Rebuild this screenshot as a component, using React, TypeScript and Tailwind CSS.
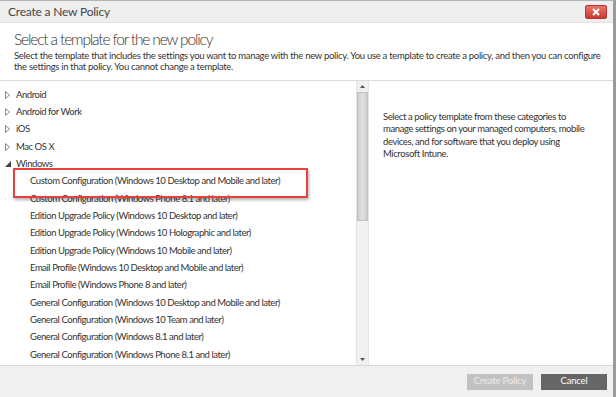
import React from "react";

const items: { label: string; level: number; icon?: "closed" | "open" }[] = [
  { label: "Android", level: 0, icon: "closed" },
  { label: "Android for Work", level: 0, icon: "closed" },
  { label: "iOS", level: 0, icon: "closed" },
  { label: "Mac OS X", level: 0, icon: "closed" },
  { label: "Windows", level: 0, icon: "open" },
  { label: "Custom Configuration (Windows 10 Desktop and Mobile and later)", level: 1 },
  { label: "Custom Configuration (Windows Phone 8.1 and later)", level: 1 },
  { label: "Edition Upgrade Policy (Windows 10 Desktop and later)", level: 1 },
  { label: "Edition Upgrade Policy (Windows 10 Holographic and later)", level: 1 },
  { label: "Edition Upgrade Policy (Windows 10 Mobile and later)", level: 1 },
  { label: "Email Profile (Windows 10 Desktop and Mobile and later)", level: 1 },
  { label: "Email Profile (Windows Phone 8 and later)", level: 1 },
  { label: "General Configuration (Windows 10 Desktop and Mobile and later)", level: 1 },
  { label: "General Configuration (Windows 10 Team and later)", level: 1 },
  { label: "General Configuration (Windows 8.1 and later)", level: 1 },
  { label: "General Configuration (Windows Phone 8.1 and later)", level: 1 },
];

function Tri({ open }: { open: boolean }) {
  return open ? (
    <svg width="6" height="6" viewBox="0 0 6 6" className="shrink-0">
      <path d="M6 0 L6 6 L0 6 Z" fill="#444" />
    </svg>
  ) : (
    <svg width="5" height="8" viewBox="0 0 5 8" className="shrink-0">
      <path d="M0.5 0.5 L4.5 4 L0.5 7.5 Z" fill="none" stroke="#888" strokeWidth="1" />
    </svg>
  );
}

export default function App() {
  return (
    <div
      className="w-[616px] h-[397px] bg-white flex flex-col overflow-hidden text-[#333]"
      style={{ fontFamily: 'Lato, "Open Sans", sans-serif' }}
    >
      <div className="flex flex-col flex-1 border-r-[3px] border-r-[#9a9a9a] border-t border-t-[#b5b5b5]">
        {/* Title bar */}
        <div className="h-[22px] bg-[#efeff0] flex items-center justify-between pl-[8px] pr-[6px] border-b border-[#e2e2e2]">
          <span className="text-[12px] tracking-[-0.2px] text-[#444]">Create a New Policy</span>
          <div className="w-[22px] h-[14px] rounded-[2px] bg-gradient-to-b from-[#e8766a] to-[#c8382c] border border-[#b33] flex items-center justify-center">
            <svg width="8" height="8" viewBox="0 0 8 8">
              <path d="M1 1 L7 7 M7 1 L1 7" stroke="white" strokeWidth="2" />
            </svg>
          </div>
        </div>
        {/* Header */}
        <div className="pl-[14px] pr-[10px] pt-[5px] h-[58px] border-b border-[#dcdcdc]">
          <div className="text-[15.5px] font-light leading-[22px] tracking-[-1.15px] text-[#333]">
            Select a template for the new policy
          </div>
          <div className="text-[9.5px] leading-[11px] tracking-[-0.3px] text-[#333]">
            Select the template that includes the settings you want to manage with the new policy. You use a template to create a policy, and then you can configure the settings in that policy. You cannot change a template.
          </div>
        </div>
        {/* Body */}
        <div className="flex flex-1 min-h-0">
          <div className="w-[356px] relative pt-[5px]">
            {items.map((it, i) => (
              <div
                key={i}
                className={`h-[17.35px] flex items-center text-[9.5px] tracking-[-0.45px] text-[#333] ${
                  it.level === 0 ? "pl-[5px]" : "pl-[30px]"
                }`}
              >
                {it.icon && (
                  <span className="w-[11px] flex items-center">
                    <Tri open={it.icon === "open"} />
                  </span>
                )}
                <span>{it.label}</span>
              </div>
            ))}
            <div className="absolute left-[13px] top-[87px] w-[295px] h-[30px] border-2 border-[#e8403c] shadow-[1px_2px_3px_rgba(0,0,0,0.3)]" />
          </div>
          {/* Scrollbar */}
          <div className="w-[13px] bg-[#f0f0f0] flex flex-col items-center border-x border-[#e4e4e4]">
            <div className="h-[11px] flex items-center justify-center">
              <svg width="5" height="3" viewBox="0 0 5 3">
                <path d="M2.5 0 L5 3 L0 3 Z" fill="#555" />
              </svg>
            </div>
            <div className="w-[11px] h-[129px] bg-gradient-to-r from-[#d0d0d0] via-[#e0e0e0] to-[#cfcfcf] border border-[#c0c0c0]" />
            <div className="flex-1" />
            <div className="h-[11px] flex items-center justify-center">
              <svg width="5" height="3" viewBox="0 0 5 3">
                <path d="M0 0 L5 0 L2.5 3 Z" fill="#555" />
              </svg>
            </div>
          </div>
          {/* Right panel */}
          <div className="flex-1 pl-[14px] pr-[10px] pt-[30px]">
            <p className="text-[9.5px] leading-[12.3px] tracking-[-0.4px] text-[#333] w-[214px]">
              Select a policy template from these categories to manage settings on your managed computers, mobile devices, and for software that you deploy using Microsoft Intune.
            </p>
          </div>
        </div>
        {/* Footer */}
        <div className="h-[32px] bg-[#f0f0f1] border-t border-[#d8d8d8] flex items-center justify-end gap-[8px] pr-[6px]">
          <button className="w-[66px] h-[16px] bg-[#c2c2c2] text-[#ececec] text-[9.5px] tracking-[-0.2px] flex items-center justify-center">
            Create Policy
          </button>
          <button className="w-[66px] h-[16px] bg-[#666] text-white text-[9.5px] tracking-[-0.2px] flex items-center justify-center">
            Cancel
          </button>
        </div>
      </div>
    </div>
  );
}
